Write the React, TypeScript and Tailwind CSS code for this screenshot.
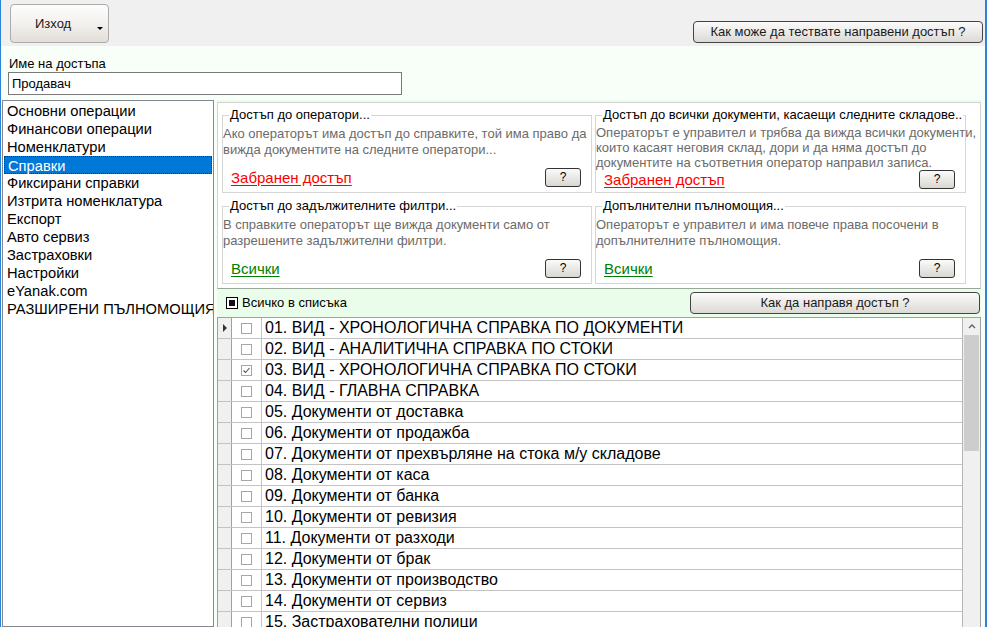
import React from "react";

const menu = [
  "Основни операции",
  "Финансови операции",
  "Номенклатури",
  "Справки",
  "Фиксирани справки",
  "Изтрита номенклатура",
  "Експорт",
  "Авто сервиз",
  "Застраховки",
  "Настройки",
  "eYanak.com",
  "РАЗШИРЕНИ ПЪЛНОМОЩИЯ",
];

const reports = [
  { name: "01. ВИД - ХРОНОЛОГИЧНА СПРАВКА ПО ДОКУМЕНТИ", checked: false },
  { name: "02. ВИД - АНАЛИТИЧНА СПРАВКА ПО СТОКИ", checked: false },
  { name: "03. ВИД - ХРОНОЛОГИЧНА СПРАВКА ПО СТОКИ", checked: true },
  { name: "04. ВИД - ГЛАВНА СПРАВКА", checked: false },
  { name: "05. Документи от доставка", checked: false },
  { name: "06. Документи от продажба", checked: false },
  { name: "07. Документи от прехвърляне на стока м/у складове", checked: false },
  { name: "08. Документи от каса", checked: false },
  { name: "09. Документи от банка", checked: false },
  { name: "10. Документи от ревизия", checked: false },
  { name: "11. Документи от разходи", checked: false },
  { name: "12. Документи от брак", checked: false },
  { name: "13. Документи от производство", checked: false },
  { name: "14. Документи от сервиз", checked: false },
  { name: "15. Застрахователни полици", checked: false },
];

// кутия с настройка за достъп (fieldset + legend)
function AccessBox({
  title,
  lines,
  link,
  green,
  tight,
}: {
  title: string;
  lines: string[];
  link: string;
  green?: boolean;
  tight?: boolean;
}) {
  return (
    <fieldset className="min-w-0 border border-[#d6d6d6] px-0 pb-[4px]">
      <legend className="ml-[6px] px-[1px] text-[13px] leading-[14px] text-black whitespace-nowrap">
        {title}
      </legend>
      <div className="flex h-[66px] flex-col">
        <div
          className={
            "pt-[4px] text-[13px] text-[#6b6b6b] whitespace-nowrap " +
            (tight ? "leading-[15px] -mt-[1px]" : "leading-[16px]")
          }
        >
          {lines.map((l) => (
            <div key={l}>{l}</div>
          ))}
        </div>
        <div className="mt-auto mb-[1px] flex h-[19px] items-center justify-between pl-[8px] pr-[10px]">
          <span
            className={
              "text-[15px] leading-[17px] underline underline-offset-[2px] " +
              (green ? "text-[#008000]" : "text-[#ff0000]")
            }
          >
            {link}
          </span>
          <button className="h-[19px] w-[36px] rounded-[3px] border border-[#333] bg-gradient-to-b from-[#fbfbfb] to-[#d9d7d2] text-[12px] leading-[17px] text-black">
            ?
          </button>
        </div>
      </div>
    </fieldset>
  );
}

function GridCheck({ checked }: { checked: boolean }) {
  return (
    <span className="flex h-[11px] w-[11px] items-center justify-center border border-[#a6a6a6] bg-white">
      {checked && (
        <svg width="9" height="9" viewBox="0 0 9 9">
          <path d="M1.5 4.5 L3.5 6.5 L7.5 2" fill="none" stroke="#555" strokeWidth="1.1" />
        </svg>
      )}
    </span>
  );
}

export default function App() {
  return (
    <div className="flex h-[627px] w-[987px] flex-col overflow-hidden border-l border-r-2 border-[#2b84d8] bg-[#f8fff8] font-['Liberation_Sans',Arial,sans-serif] text-black">
      {/* Toolbar */}
      <div className="flex h-[46px] shrink-0 items-start justify-between bg-[#f0f0f0] pl-[9px] pr-[2px] pt-[4px]">
        <button className="relative flex h-[39px] w-[99px] items-center rounded-[4px] border border-[#acacac] bg-gradient-to-b from-[#fdfdfd] via-[#f3f1ee] to-[#e2ded8] pl-[24px] text-[13px] text-[#1a1a1a]">
          Изход
          <span className="absolute right-[5px] top-[22px] h-0 w-0 border-x-[3px] border-t-[3px] border-x-transparent border-t-black" />
        </button>
        <button className="mt-[17px] h-[22px] w-[290px] rounded-[4px] border border-[#444] bg-gradient-to-b from-[#fbfbfb] to-[#dcdad5] text-[13px] leading-[20px] text-[#1a1a1a]">
          Как може да тествате направени достъп ?
        </button>
      </div>

      {/* Име */}
      <div className="shrink-0 pt-[10px]">
        <div className="pl-[8px] text-[13px] leading-[15px]">Име на достъпа</div>
        <div className="ml-[7px] mt-[1px] flex h-[23px] w-[394px] items-center border border-[#7a7a7a] bg-white pl-[3px] text-[13px]">
          Продавач
        </div>
      </div>

      {/* Main */}
      <div className="mt-[5px] flex min-h-0 flex-1">
        {/* Menu list */}
        <div className="ml-[1px] w-[212px] shrink-0 overflow-hidden border border-[#828790] bg-white pt-[1px] text-[14.7px]">
          {menu.map((m) => (
            <div
              key={m}
              className={
                "mx-[1px] h-[18px] whitespace-nowrap pl-[3px] leading-[18px] " +
                (m === "Справки"
                  ? "border border-dotted border-[#333] bg-[#0078d7] pl-[2px] leading-[16px] text-white"
                  : "")
              }
            >
              {m}
            </div>
          ))}
        </div>

        {/* Right side */}
        <div className="ml-[3px] mr-[4px] flex min-w-0 flex-1 flex-col bg-[#eafdea]">
          <div className="mt-[2px] border border-[#d3d3d3] border-b-[#9aa89a] bg-white pb-[4px] pl-[4px] pr-[15px] pt-[5px]">
            <div className="grid grid-cols-[370px_371px] gap-x-[3px] gap-y-[6px]">
              <AccessBox
                title="Достъп до оператори..."
                lines={[
                  "Ако операторът има достъп до справките, той има право да",
                  "вижда документите на следните оператори...",
                ]}
                link="Забранен достъп"
              />
              <AccessBox
                title="Достъп до всички документи, касаещи следните складове.."
                lines={[
                  "Операторът е управител и трябва да вижда всички документи,",
                  "които касаят неговия склад, дори и да няма достъп до",
                  "документите на съответния оператор направил записа.",
                ]}
                link="Забранен достъп"
                tight
              />
              <AccessBox
                title="Достъп до задължителните филтри..."
                lines={[
                  "В справките операторът ще вижда документи само от",
                  "разрешените задължителни филтри.",
                ]}
                link="Всички"
                green
              />
              <AccessBox
                title="Допълнителни пълномощия..."
                lines={[
                  "Операторът е управител и има повече права посочени в",
                  "допълнителните пълномощия.",
                ]}
                link="Всички"
                green
              />
            </div>
          </div>

          {/* Лента над списъка */}
          <div className="flex h-[28px] shrink-0 items-center justify-between pl-[9px] pr-[1px]">
            <div className="flex items-center gap-[4px] text-[13px]">
              <span className="flex h-[12px] w-[12px] items-center justify-center border border-black bg-white">
                <span className="h-[6px] w-[6px] bg-[#111]" />
              </span>
              Всичко в списъка
            </div>
            <button className="h-[22px] w-[290px] rounded-[4px] border border-[#444] bg-gradient-to-b from-[#fbfbfb] to-[#dcdad5] text-[13px] leading-[20px] text-[#1a1a1a]">
              Как да направя достъп ?
            </button>
          </div>

          {/* Grid */}
          <div className="flex min-h-0 flex-1 border border-[#a0a0a0] border-b-0 bg-white">
            <div className="min-w-0 flex-1 overflow-hidden border-r border-[#b5b5b5]">
              {reports.map((r, i) => (
                <div key={r.name} className="flex h-[21px] border-b border-[#c3c3c3]">
                  <div className="flex w-[14px] shrink-0 items-center justify-center border-r border-[#a0a0a0] bg-[#f0f0f0]">
                    {i === 0 && (
                      <span className="h-0 w-0 border-y-[4px] border-l-[4px] border-y-transparent border-l-[#333]" />
                    )}
                  </div>
                  <div className="flex w-[30px] shrink-0 items-center justify-center border-r border-[#c3c3c3]">
                    <GridCheck checked={r.checked} />
                  </div>
                  <div className="whitespace-nowrap pl-[3px] text-[16px] leading-[20px]">{r.name}</div>
                </div>
              ))}
            </div>
            <div className="flex w-[17px] shrink-0 flex-col bg-[#f0f0f0]">
              <div className="flex h-[17px] items-center justify-center">
                <svg width="8" height="5" viewBox="0 0 8 5">
                  <path d="M1 4 L4 1 L7 4" fill="none" stroke="#606060" strokeWidth="1.3" />
                </svg>
              </div>
              <div className="mx-[1px] h-[116px] bg-[#cdcdcd]" />
            </div>
          </div>
        </div>
      </div>
    </div>
  );
}
